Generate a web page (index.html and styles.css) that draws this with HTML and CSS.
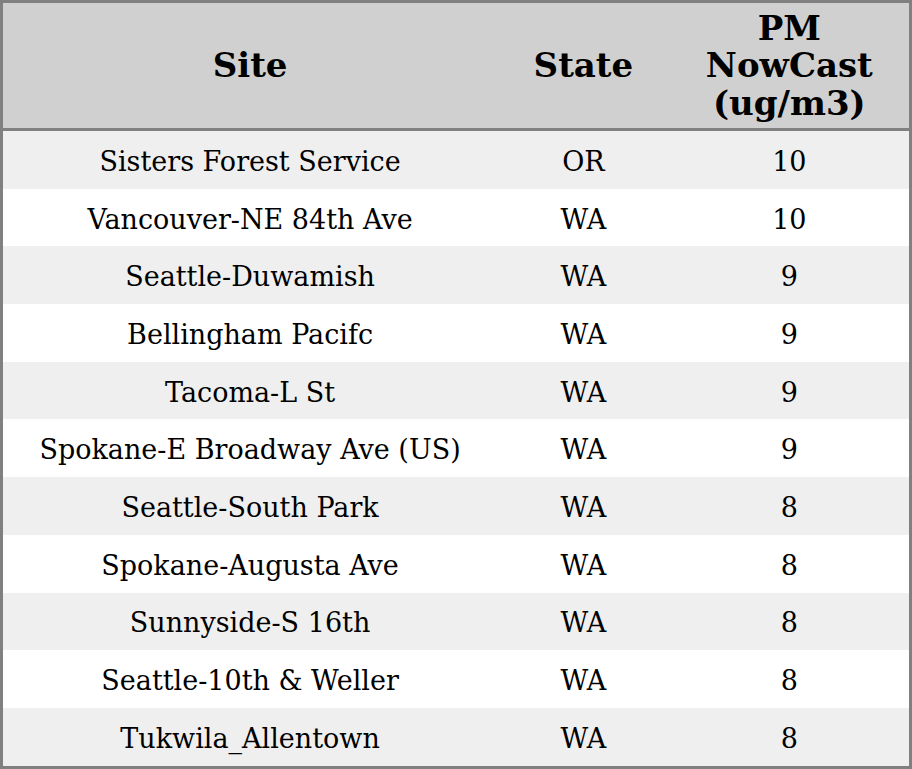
FILE: index.html
```html
<!DOCTYPE html>
<html>
<head>
<meta charset="utf-8">
<link rel="stylesheet" href="styles.css">
</head>
<body>
<table class="aq">
<colgroup><col class="c-site"><col class="c-state"><col class="c-pm"></colgroup>
<thead>
<tr><th>Site</th><th>State</th><th>PM<br>NowCast<br>(ug/m3)</th></tr>
</thead>
<tbody>
<tr><td>Sisters Forest Service</td><td>OR</td><td>10</td></tr>
<tr><td>Vancouver-NE 84th Ave</td><td>WA</td><td>10</td></tr>
<tr><td>Seattle-Duwamish</td><td>WA</td><td>9</td></tr>
<tr><td>Bellingham Pacifc</td><td>WA</td><td>9</td></tr>
<tr><td>Tacoma-L St</td><td>WA</td><td>9</td></tr>
<tr><td>Spokane-E Broadway Ave (US)</td><td>WA</td><td>9</td></tr>
<tr><td>Seattle-South Park</td><td>WA</td><td>8</td></tr>
<tr><td>Spokane-Augusta Ave</td><td>WA</td><td>8</td></tr>
<tr><td>Sunnyside-S 16th</td><td>WA</td><td>8</td></tr>
<tr><td>Seattle-10th &amp; Weller</td><td>WA</td><td>8</td></tr>
<tr><td>Tukwila_Allentown</td><td>WA</td><td>8</td></tr>
</tbody>
</table>
</body>
</html>
```
FILE: styles.css
```css
html, body { margin: 0; padding: 0; background: #fff; }
.aq {
  width: 912px;
  border-collapse: collapse;
  table-layout: fixed;
  border: 3px solid #808080;
  font-family: "DejaVu Serif", serif;
  color: #000;
}
.c-site { width: 494px; }
.c-state { width: 172px; }
.c-pm { width: 240px; }
.aq th {
  background: #d0d0d0;
  font-size: 34px;
  font-weight: bold;
  line-height: 37.5px;
  height: 124px;
  padding: 1px 0 0;
  text-align: center;
  vertical-align: middle;
  border-bottom: 3px solid #808080;
}
.aq td {
  font-size: 27px;
  height: 54.7px;
  padding: 3px 0 0;
  text-align: center;
  vertical-align: middle;
}
.aq tbody tr:nth-child(odd) td { background: #efefef; }
.aq tbody tr:nth-child(even) td { background: #fff; }
```
